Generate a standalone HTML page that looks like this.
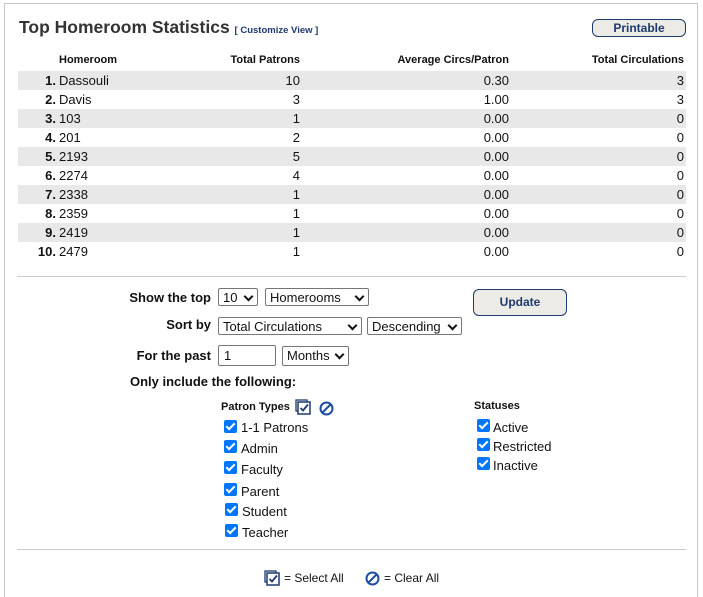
<!DOCTYPE html>
<html><head><style>
html,body{margin:0;width:703px;height:597px;overflow:hidden}
body{background:#fff;font-family:"Liberation Sans",Arial,sans-serif;color:#111;position:relative}
.a{position:absolute;white-space:nowrap}
.frame{position:absolute;left:4px;top:3px;width:692px;height:594px;border:1px solid #c8c8c8;border-bottom:0}
.row{position:absolute;left:18px;width:668px;height:19px;font-size:13px;line-height:19px}
.row.g{background:#e8e8e8}
.row span{position:absolute}
.n{right:630px;font-weight:bold}
.h{left:41px}
.c1{right:386px}.c2{right:177px}.c3{right:2px}
.hd{font-size:11px;font-weight:bold;top:54px}
.lbl{font-size:13px;font-weight:bold}
.sel{position:absolute;height:18px;border:1px solid #767676;border-radius:2px;font-size:13px;line-height:18px;padding-left:4px;box-sizing:border-box;background:#fff}
.sel.d:after{content:"";position:absolute;right:5px;top:4px;width:5px;height:5px;border-right:2px solid #111;border-bottom:2px solid #111;transform:rotate(45deg)}
.cb{position:absolute;width:13px;height:13px;background:#0075ff;border-radius:2px}
.cb:after{content:"";position:absolute;left:4px;top:1px;width:3px;height:7px;border-right:2px solid #fff;border-bottom:2px solid #fff;transform:rotate(45deg)}
.ct{position:absolute;font-size:13px}
.btn{position:absolute;border:1px solid #1e3a6e;border-radius:6px;background:#ecebe6;color:#1e3a6e;font-weight:bold;font-size:12px;text-align:center;box-sizing:border-box}
hr{position:absolute;margin:0;border:0;border-top:1px solid #ccc;height:0}
</style></head><body>
<div class="frame"></div>
<div class="a" style="left:19px;top:17px;font-size:17.5px;font-weight:bold;color:#333">Top Homeroom Statistics <span style="font-size:9.5px;color:#1e3a6e">[ Customize View ]</span></div>
<div class="btn" style="left:592px;top:19px;width:94px;height:18px;line-height:16px">Printable</div>
<div class="a hd" style="left:59px">Homeroom</div>
<div class="a hd" style="right:403px">Total Patrons</div>
<div class="a hd" style="right:194px">Average Circs/Patron</div>
<div class="a hd" style="right:19px">Total Circulations</div>
<div class="row g" style="top:71px"><span class="n">1.</span><span class="h">Dassouli</span><span class="c1">10</span><span class="c2">0.30</span><span class="c3">3</span></div>
<div class="row" style="top:90px"><span class="n">2.</span><span class="h">Davis</span><span class="c1">3</span><span class="c2">1.00</span><span class="c3">3</span></div>
<div class="row g" style="top:109px"><span class="n">3.</span><span class="h">103</span><span class="c1">1</span><span class="c2">0.00</span><span class="c3">0</span></div>
<div class="row" style="top:128px"><span class="n">4.</span><span class="h">201</span><span class="c1">2</span><span class="c2">0.00</span><span class="c3">0</span></div>
<div class="row g" style="top:147px"><span class="n">5.</span><span class="h">2193</span><span class="c1">5</span><span class="c2">0.00</span><span class="c3">0</span></div>
<div class="row" style="top:166px"><span class="n">6.</span><span class="h">2274</span><span class="c1">4</span><span class="c2">0.00</span><span class="c3">0</span></div>
<div class="row g" style="top:185px"><span class="n">7.</span><span class="h">2338</span><span class="c1">1</span><span class="c2">0.00</span><span class="c3">0</span></div>
<div class="row" style="top:204px"><span class="n">8.</span><span class="h">2359</span><span class="c1">1</span><span class="c2">0.00</span><span class="c3">0</span></div>
<div class="row g" style="top:223px"><span class="n">9.</span><span class="h">2419</span><span class="c1">1</span><span class="c2">0.00</span><span class="c3">0</span></div>
<div class="row" style="top:242px"><span class="n">10.</span><span class="h">2479</span><span class="c1">1</span><span class="c2">0.00</span><span class="c3">0</span></div>
<hr style="left:17px;top:276px;width:669px">
<div class="a lbl" style="right:492px;top:290px">Show the top</div>
<div class="sel d" style="left:218px;top:288px;width:40px">10</div>
<div class="sel d" style="left:265px;top:288px;width:104px">Homerooms</div>
<div class="btn" style="left:473px;top:289px;width:94px;height:27px;line-height:25px">Update</div>
<div class="a lbl" style="right:492px;top:317px">Sort by</div>
<div class="sel d" style="left:218px;top:317px;width:144px">Total Circulations</div>
<div class="sel d" style="left:367px;top:317px;width:95px">Descending</div>
<div class="a lbl" style="right:492px;top:348px">For the past</div>
<div class="sel" style="left:218px;top:345px;width:58px;height:21px;line-height:20px;padding-left:5px">1</div>
<div class="sel d" style="left:282px;top:346px;width:67px;height:20px">Months</div>
<div class="a lbl" style="left:130px;top:374px">Only include the following:</div>
<div class="a" style="left:221px;top:401px;font-size:11px;font-weight:bold">Patron Types</div>
<svg class="a" style="left:295px;top:399px" width="16" height="16" viewBox="0 0 16 16"><rect x="1" y="1" width="11" height="11" fill="none" stroke="#1e3a6e" stroke-width="1.3"/><rect x="3" y="3" width="12" height="12" fill="#fff" stroke="#1e3a6e" stroke-width="1.5"/><path d="M5.5 9l2.5 2.5 5-6" fill="none" stroke="#1e3a6e" stroke-width="1.8"/></svg>
<svg class="a" style="left:319px;top:401px" width="15" height="15" viewBox="0 0 15 15"><circle cx="7.5" cy="7.5" r="6" fill="none" stroke="#1e4fa0" stroke-width="2"/><path d="M3.5 11.5l8-8" stroke="#1e4fa0" stroke-width="2"/></svg>
<div class="a" style="left:474px;top:400px;font-size:11px;font-weight:bold">Statuses</div>
<div class="cb" style="left:224px;top:420px"></div><div class="ct" style="left:241px;top:420px">1-1 Patrons</div>
<div class="cb" style="left:224px;top:440px"></div><div class="ct" style="left:241px;top:441px">Admin</div>
<div class="cb" style="left:224px;top:461px"></div><div class="ct" style="left:241px;top:462px">Faculty</div>
<div class="cb" style="left:224px;top:483px"></div><div class="ct" style="left:241px;top:484px">Parent</div>
<div class="cb" style="left:225px;top:503px"></div><div class="ct" style="left:242px;top:504px">Student</div>
<div class="cb" style="left:225px;top:524px"></div><div class="ct" style="left:242px;top:525px">Teacher</div>
<div class="cb" style="left:477px;top:419px"></div><div class="ct" style="left:493px;top:420px">Active</div>
<div class="cb" style="left:477px;top:438px"></div><div class="ct" style="left:493px;top:439px">Restricted</div>
<div class="cb" style="left:477px;top:457px"></div><div class="ct" style="left:493px;top:458px">Inactive</div>
<hr style="left:17px;top:549px;width:669px">
<svg class="a" style="left:264px;top:570px" width="16" height="16" viewBox="0 0 16 16"><rect x="1" y="1" width="11" height="11" fill="none" stroke="#1e3a6e" stroke-width="1.3"/><rect x="3" y="3" width="12" height="12" fill="#fff" stroke="#1e3a6e" stroke-width="1.5"/><path d="M5.5 9l2.5 2.5 5-6" fill="none" stroke="#1e3a6e" stroke-width="1.8"/></svg>
<div class="a" style="left:284px;top:571px;font-size:12px">= Select All</div>
<svg class="a" style="left:365px;top:571px" width="15" height="15" viewBox="0 0 15 15"><circle cx="7.5" cy="7.5" r="6" fill="none" stroke="#1e4fa0" stroke-width="2"/><path d="M3.5 11.5l8-8" stroke="#1e4fa0" stroke-width="2"/></svg>
<div class="a" style="left:384px;top:571px;font-size:12px">= Clear All</div>
</body></html>
